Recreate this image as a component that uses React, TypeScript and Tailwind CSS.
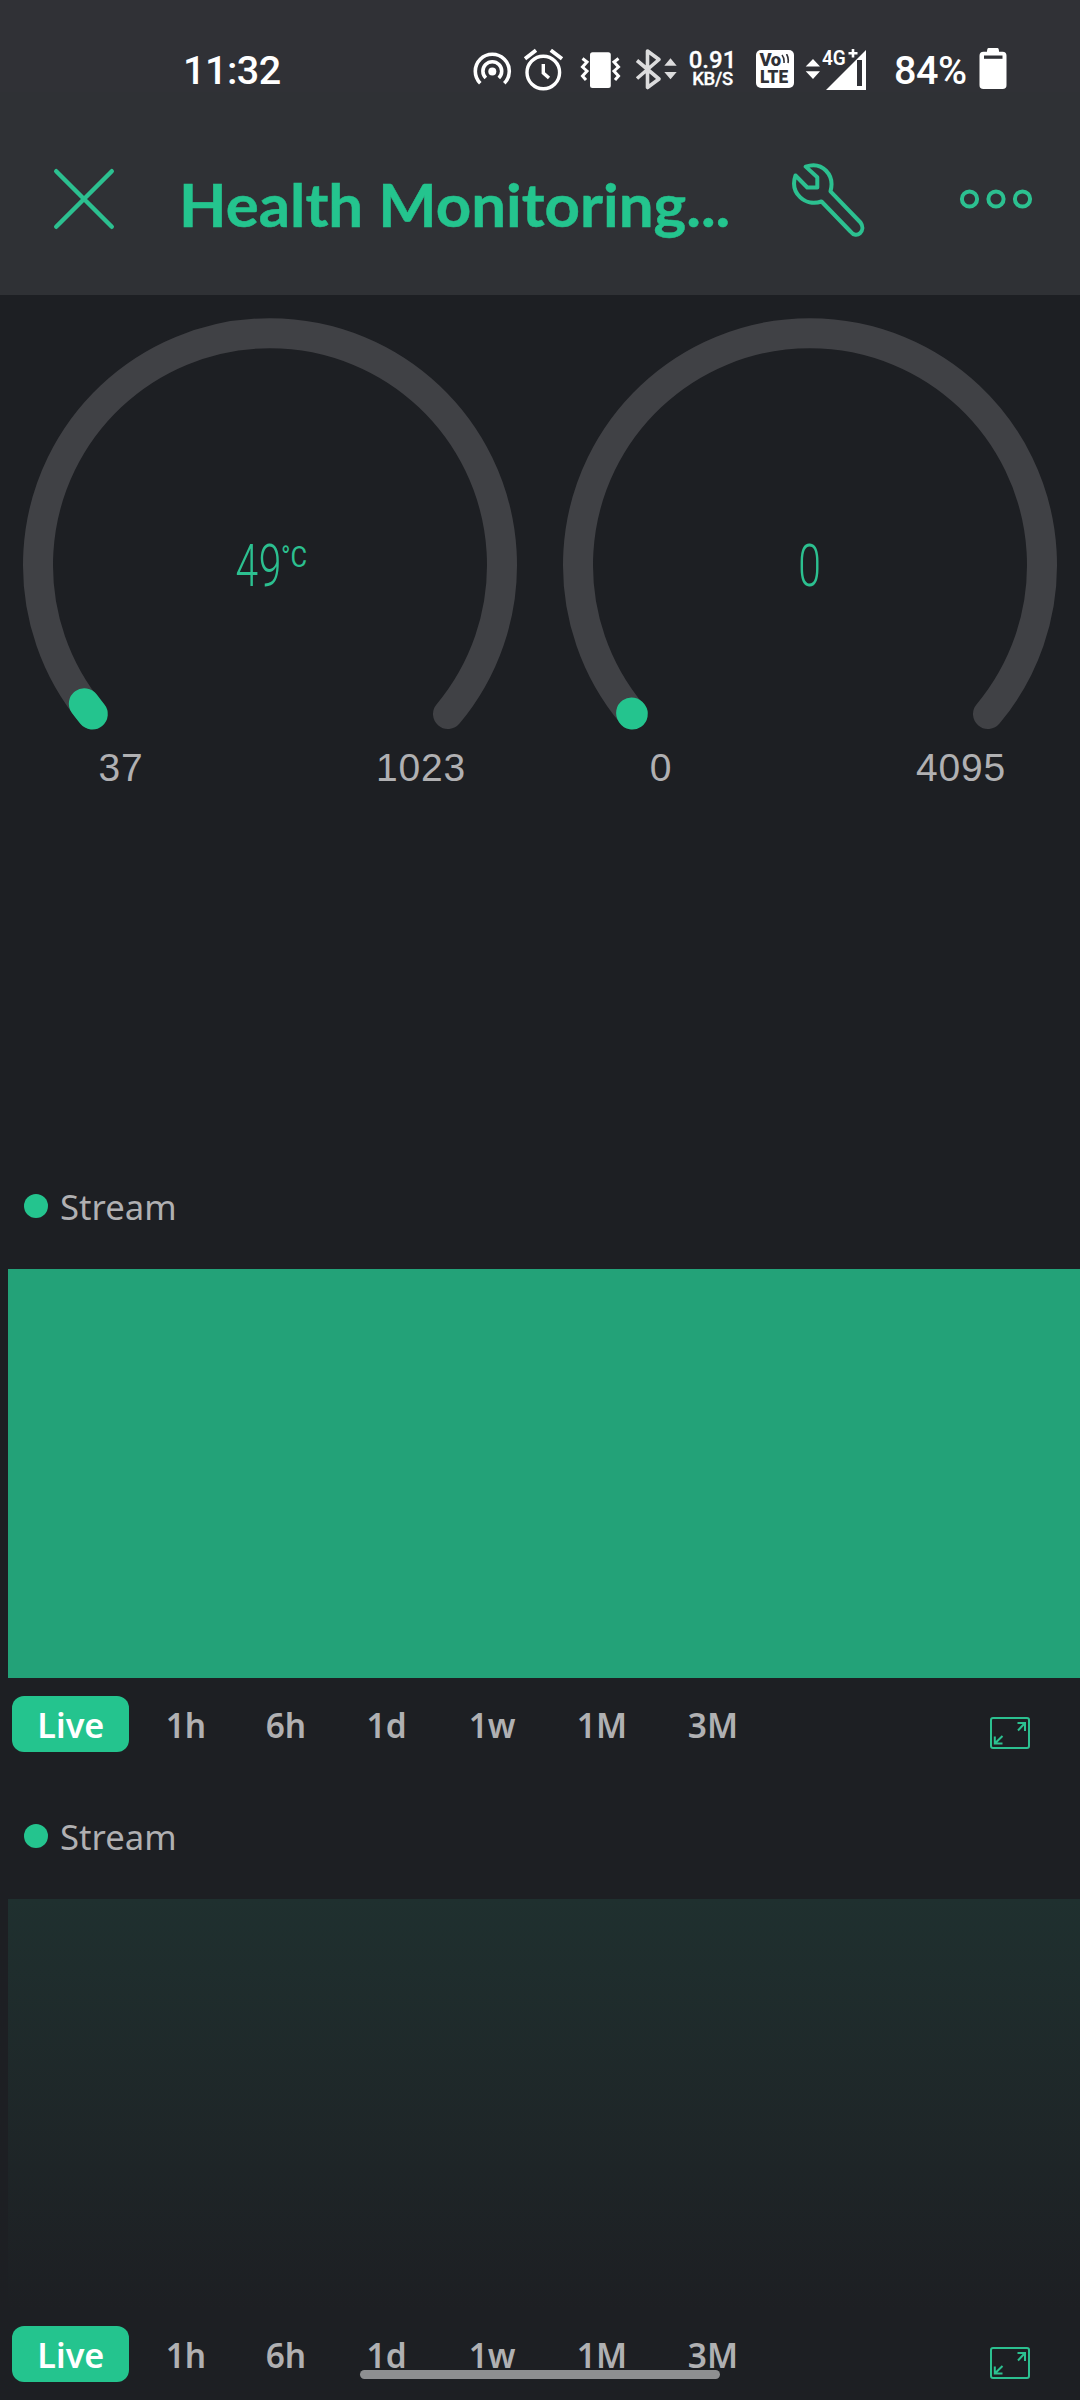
import React from "react";

const GREEN = "#24c48e";

function StatusBar() {
  return (
    <div className="flex h-[92px] items-start pt-[48px] text-white">
      <div className="ml-[183px] mt-[1px] w-[290px] font-[Roboto] text-[39.5px] leading-[44px] font-medium tracking-[-0.5px]">11:32</div>
      <svg className="h-[44px] w-[40px] shrink-0" viewBox="473 48 40 44" fill="none" stroke="#fff" strokeWidth="3.6">
        <path d="M480.3 83.3A17 17 0 1 1 504.3 83.3" />
        <path d="M485.8 78A9.4 9.4 0 1 1 498.8 78" />
        <circle cx="492.3" cy="71.6" r="4" fill="#fff" stroke="none" />
      </svg>
      <svg className="ml-[10px] h-[44px] w-[42px] shrink-0" viewBox="523 48 42 44" fill="none" stroke="#fff" strokeWidth="3.4">
        <circle cx="543.3" cy="72.5" r="16.3" />
        <path d="M525 58.8L536 50.2M550.8 50.2L562 58.8" strokeWidth="3.8" />
        <path d="M543.3 64V73L549 78" />
      </svg>
      <svg className="ml-[15px] h-[44px] w-[42px] shrink-0" viewBox="580 48 42 44" fill="none" stroke="#fff" strokeWidth="3">
        <rect x="590" y="52.3" width="20.8" height="35.8" rx="2.5" fill="#fff" stroke="none" />
        <path d="M582.5 58.5L587 62L582.5 67L587 71L582.5 76L586 80" />
        <path d="M618.5 58.5L614 62L618.5 67L614 71L618.5 76L615 80" />
      </svg>
      <svg className="ml-[12px] h-[44px] w-[46px] shrink-0" viewBox="634 48 46 44" fill="none" stroke="#dcdcdd" strokeWidth="3.6">
        <path d="M637 60.5L659 79L647.5 87.5V51L659 59.5L637 78.5" strokeLinejoin="round" />
        <path d="M664.3 65.7L670.5 58.3L676.7 65.7ZM664.3 72L670.5 79.2L676.7 72Z" fill="#dcdcdd" stroke="none" />
      </svg>
      <div className="ml-[9px] flex w-[47px] shrink-0 flex-col items-center font-[Roboto] font-medium">
        <span className="text-[24px] leading-[24px] [-webkit-text-stroke:0.3px_white]">0.91</span>
        <span className="-mt-[1px] text-[18.5px] leading-[17px] tracking-[-0.3px] [-webkit-text-stroke:0.3px_white]">KB/S</span>
      </div>
      <div className="ml-[20px] mt-[2px] flex h-[38px] w-[38px] shrink-0 flex-col rounded-[5px] bg-white pl-[3.5px] pt-[2px] font-[Roboto] text-[18.5px] leading-[17px] font-black text-[#303136]">
        <span className="flex tracking-[-0.5px]">
          Vo
          <svg className="mt-[2px] h-[10px] w-[10px]" viewBox="0 0 10 10" fill="none" stroke="#303136" strokeWidth="1.6">
            <path d="M1 1Q3.5 4 3 9M5.5 0Q8 4 7 9" />
          </svg>
        </span>
        <span className="origin-left scale-x-[0.93]">LTE</span>
      </div>
      <div className="relative ml-[11px] h-[44px] w-[62px] shrink-0">
        <svg className="h-[44px] w-[62px]" viewBox="805 48 62 44" fill="#fff">
          <path d="M805.7 66.5L813 59L820 66.5ZM805.7 71.2L813 79L820 71.2Z" />
          <path fillRule="evenodd" d="M866 50V90H826ZM857 60V86H862V60Z" />
        </svg>
        <span className="absolute left-[17px] top-[1px] origin-left scale-x-[0.95] font-[Roboto] text-[20px] leading-[18px] font-semibold">4G</span>
        <svg className="absolute left-[43px] top-0 h-[10px] w-[10px]" viewBox="0 0 10 10" stroke="#fff" strokeWidth="2.6">
          <path d="M5 1V9.5M.5 5.2H9.5" />
        </svg>
      </div>
      <div className="mt-[1px] ml-[27px] w-[85px] font-[Roboto] text-[39.5px] leading-[44px] font-medium tracking-[-0.4px]">84%</div>
      <svg className="h-[44px] w-[28px] shrink-0" viewBox="978.5 48 28 44" fill="#fff">
        <path d="M988 48H997Q998.5 48 998.5 51.8H1002Q1006 51.8 1006 55.8V85.2Q1006 89 1002 89H983Q979 89 979 85.2V55.8Q979 51.8 983 51.8H986.500Q986.500 48 988 48Z" />
        <path d="M983.500 55.500H1002V58.800H983.500Z" fill="#303136" />
      </svg>
    </div>
  );
}

function TitleBar() {
  return (
    <div className="flex h-[203px] items-start bg-[#2f3135] pt-[71px]">
      <svg className="ml-[52px] mt-[4px] h-[64px] w-[64px] shrink-0" viewBox="52 167 64 64" stroke="#2cc090" strokeWidth="4.4" strokeLinecap="round">
        <path d="M56.200 171.200L111.800 226.800M111.800 171.200L56.200 226.800" />
      </svg>
      <h1 className="ml-[63px] mt-[5px] w-[611px] shrink-0 origin-left scale-x-[1.03] font-[Lato] text-[60px] leading-[72px] font-bold whitespace-nowrap text-[#24c48e] [-webkit-text-stroke:0.5px_#24c48e]">
        Health Monitoring...
      </h1>
      <svg className="h-[76px] w-[76px] shrink-0" viewBox="790 163 76 76" fill="none" stroke="#2cc090" strokeWidth="4" strokeLinejoin="round">
        <path d="M805.700 166.600C822.500 161 835 175 830.500 191.300L860.500 222.500C866.500 231 856.500 239.500 850.500 231.500L821.500 201.500C805 207 789.500 193 795.500 175.500L807.300 187.500H817.300V177.300Z" />
      </svg>
      <svg className="ml-[92px] mt-[24px] h-[24px] w-[78px] shrink-0" viewBox="958 187 78 24" fill="none" stroke="#2cc090" strokeWidth="4">
        <circle cx="969.500" cy="199" r="7.600" />
        <circle cx="996" cy="199" r="7.600" />
        <circle cx="1022.500" cy="199" r="7.600" />
      </svg>
    </div>
  );
}

type GaugeProps = { value: string; unit?: string; min: string; max: string; arc: string };

function Gauge({ value, unit, min, max, arc }: GaugeProps) {
  return (
    <section className="h-[888px] w-[540px] pt-[15px]">
      <div className="relative h-[430px]">
        <svg className="block h-[430px] w-[540px]" viewBox="0 310 540 430" fill="none" strokeWidth="30" strokeLinecap="round">
          <path d="M92 714A232 232 0 1 1 448 714" stroke="#404145" />
          <path d={arc} stroke={GREEN} strokeWidth="31" />
        </svg>
        <div className="absolute inset-x-0 top-[226px] flex h-[60px] items-start justify-center text-[#2cc090]">
          <div className="flex items-start">
            <span className="inline-block scale-x-[0.69] font-[Roboto] text-[59px] leading-[60px] font-light tracking-[1px]">{value}</span>
            {unit && <span className="-ml-[11px] mr-[4px] mt-[5px] inline-block origin-left scale-x-[0.88] font-[Roboto] text-[29px] leading-[32px]">{unit}</span>}
          </div>
        </div>
      </div>
      <div className="mt-[6px] flex font-['Liberation_Sans'] text-[39px] leading-[44px] tracking-[0.8px] text-[#b0b0b2]">
        <span className="ml-[21px] w-[200px] text-center">{min}</span>
        <span className="ml-[100px] w-[200px] text-center">{max}</span>
      </div>
    </section>
  );
}

const RANGES = [
  { label: "1h", box: "w-[101px]" },
  { label: "6h", box: "w-[100px]" },
  { label: "1d", box: "w-[102px]" },
  { label: "1w", box: "w-[108px]" },
  { label: "1M", box: "w-[111px]" },
  { label: "3M", box: "w-[111px]" },
];

function StreamChart({ fill }: { fill: string }) {
  return (
    <section className="h-[630px]">
      <div className="flex h-[86px] items-start">
        <span className="ml-[24px] mt-[11px] h-[24px] w-[24px] rounded-full bg-[#24c48e]" />
        <span className="ml-[12px] inline-block origin-left scale-x-[0.99] font-['Noto_Sans'] text-[35px] leading-[48px] text-[#b0b0b2]">Stream</span>
      </div>
      <div className={fill} />
      <div className="mt-[18px] flex h-[56px] items-center pl-[12px] font-['Noto_Sans'] text-[34.5px] font-semibold text-[#b0b0b2]">
        <button className="flex h-[56px] w-[117px] items-center justify-center rounded-[12px] bg-[#24c48e] pt-[2px] text-white">
          <span className="scale-x-[0.99]">Live</span>
        </button>
        <div className="ml-[6px] flex pt-[2px]">
          {RANGES.map((r) => (
            <button key={r.label} className={r.box}>
              <span className="inline-block scale-x-[0.97]">{r.label}</span>
            </button>
          ))}
        </div>
        <svg className="ml-[221px] mt-[18px] h-[34px] w-[42px]" viewBox="989 1716 42 34" fill="none" stroke="#2cc090" strokeWidth="2">
          <rect x="991" y="1718" width="38" height="30" rx="2" />
          <path d="M1017.500 1723H1025V1731M1025 1723L1018 1730.500M994.800 1736.500V1743.500H1002.500M994.800 1743.500L1002.500 1736" />
        </svg>
      </div>
    </section>
  );
}

export default function App() {
  return (
    <div className="relative h-[2400px] w-[1080px] overflow-hidden bg-[#1d1f23]">
      <header className="h-[295px] bg-[#303136]">
        <StatusBar />
        <TitleBar />
      </header>
      <main>
        <div className="flex">
          <Gauge value="49" unit="°C" min="37" max="1023" arc="M92.300 714A232 232 0 0 1 84.300 703.700" />
          <Gauge value="0" min="0" max="4095" arc="M92.300 714L91.600 713" />
        </div>
        <StreamChart fill="ml-[8px] h-[409px] bg-[#23a278]" />
        <StreamChart fill="ml-[8px] h-[409px] bg-linear-to-b from-[#1f302f] to-[#1d1f23]" />
      </main>
      <div className="absolute left-[360px] top-[2370px] h-[9px] w-[360px] rounded-full bg-[#8e8f91]" />
    </div>
  );
}
